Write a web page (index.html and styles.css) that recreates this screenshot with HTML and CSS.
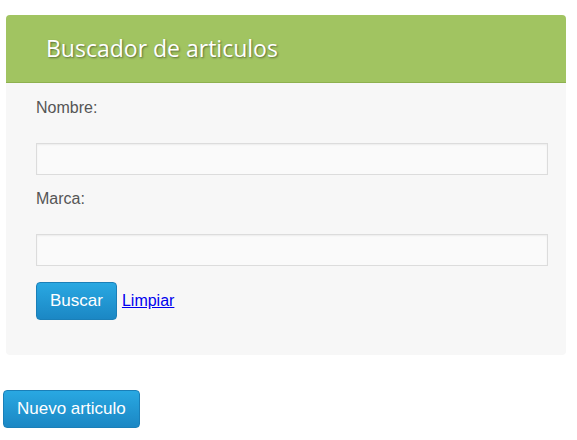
FILE: index.html
```html
<!DOCTYPE html>
<html lang="es">
<head>
<meta charset="utf-8">
<title>Buscador de articulos</title>
<link rel="stylesheet" href="styles.css">
</head>
<body>
<div class="panel">
  <div class="panel-header">
    <h1 class="panel-title">Buscador de articulos</h1>
  </div>
  <form class="panel-body">
    <label class="field-label" for="nombre">Nombre:</label>
    <input class="field-input" id="nombre" type="text">
    <label class="field-label" for="marca">Marca:</label>
    <input class="field-input" id="marca" type="text">
    <div class="actions">
      <button class="btn" type="button">Buscar</button>
      <a class="link" href="#">Limpiar</a>
    </div>
  </form>
</div>
<button class="btn btn-new" type="button">Nuevo articulo</button>
</body>
</html>
```
FILE: styles.css
```css
html, body {
  margin: 0;
  padding: 0;
  background: #ffffff;
}
body {
  font-family: "Liberation Sans", Arial, sans-serif;
  font-size: 16px;
  color: #555555;
}
.panel {
  margin: 15px 0 0 6px;
  width: 560px;
  border-radius: 4px;
  background: #f7f7f7;
  overflow: hidden;
}
.panel-header {
  height: 67px;
  background: #a1c461;
  border-bottom: 1px solid #8eb14f;
  display: flex;
  align-items: center;
  padding-left: 40px;
}
.panel-title {
  margin: 0;
  font-family: "Open Sans", sans-serif;
  font-weight: 500;
  font-size: 23px;
  color: #ffffff;
  text-shadow: 1px 1px 2px rgba(0, 0, 0, 0.45);
  position: relative;
  top: -1px;
}
.panel-body {
  display: flex;
  flex-direction: column;
  align-items: flex-start;
  padding: 15px 18px 35px 30px;
  margin: 0;
}
.field-label {
  display: block;
  line-height: 20px;
  height: 20px;
  margin-bottom: 25px;
  color: #555555;
}
.field-input {
  box-sizing: border-box;
  width: 512px;
  height: 32px;
  margin: 0 0 14px 0;
  border: 1px solid #dcdcdc;
  background: #fafafa;
  box-shadow: inset 0 1px 2px rgba(0, 0, 0, 0.06);
  font: inherit;
  padding: 4px 8px;
}
.field-input + .field-label + .field-input {
  margin-bottom: 16px;
}
.actions {
  display: flex;
  align-items: center;
  gap: 5px;
}
.btn {
  box-sizing: border-box;
  height: 38px;
  padding: 0 13px;
  border: 1px solid #1a7fb8;
  border-radius: 4px;
  background: linear-gradient(#29a8e2, #1b87c4);
  color: #ffffff;
  font-family: "Liberation Sans", Arial, sans-serif;
  font-size: 17px;
  cursor: pointer;
}
.link {
  color: #0000ee;
  text-decoration: underline;
  font-size: 16px;
}
.btn-new {
  margin: 35px 0 0 3px;
  padding: 0 13px;
}
```
